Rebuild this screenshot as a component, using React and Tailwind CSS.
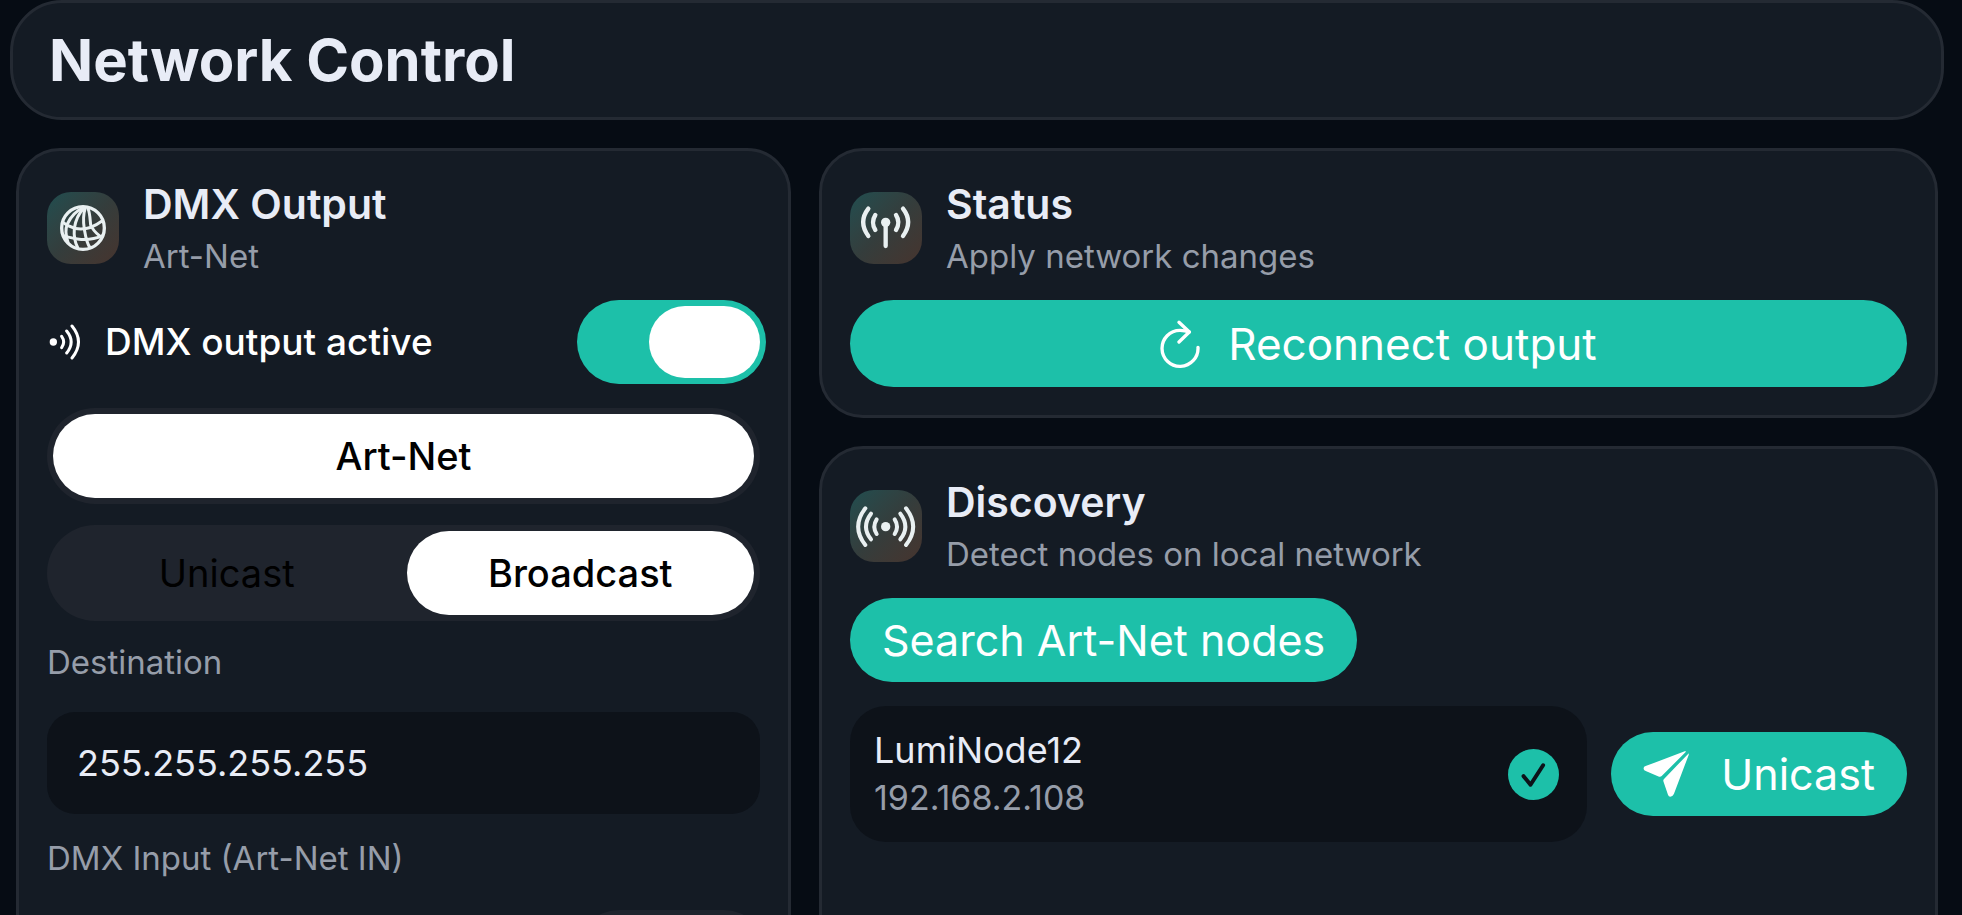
function GlobeIcon() {
  return (
    <svg viewBox="0 0 138 138" className="size-[46px]" fill="none" stroke="currentColor" strokeWidth="9" strokeLinecap="round" aria-hidden="true">
      <circle cx="69" cy="69" r="64" strokeWidth="10" />
      <path d="M70 8C48 18 31 38 22 57C15 74 17 92 24 112" />
      <path d="M73 8C57 24 47 44 43 70C41 94 43 110 54 130" />
      <path d="M76 8C70 26 69 48 73 72C77 96 79 112 90 128" />
      <path d="M84 10C90 26 90 42 92 60C98 74 108 84 118 92" />
      <path d="M8 52L24 62C54 78 88 76 126 48" />
      <path d="M10 92C42 102 82 112 128 92" />
    </svg>
  );
}

function AntennaIcon() {
  return (
    <svg viewBox="0 0 216 216" className="size-18" fill="none" stroke="currentColor" strokeWidth="13" strokeLinecap="round" aria-hidden="true">
      <circle cx="107" cy="91" r="14" fill="currentColor" stroke="none" />
      <path d="M107 94V162" />
      <path d="M76 69Q62 91 76 114M138 69Q152 91 138 114" />
      <path d="M55 50Q24 90 55 132M159 50Q190 90 159 132" />
    </svg>
  );
}

function RadioWavesIcon() {
  return (
    <svg viewBox="0 0 216 216" className="size-18" fill="none" stroke="currentColor" strokeWidth="12" strokeLinecap="round" aria-hidden="true">
      <circle cx="107" cy="110" r="14" fill="currentColor" stroke="none" />
      <path d="M80 88Q66 110 80 132M134 88Q148 110 134 132" />
      <path d="M63 71Q33 110 63 148M151 71Q181 110 151 148" />
      <path d="M46 55Q3 110 46 165M168 55Q211 110 168 165" />
    </svg>
  );
}

function WaveIcon() {
  return (
    <svg viewBox="0 0 102 114" className="w-[34px] h-[38px]" fill="none" stroke="currentColor" strokeWidth="9" strokeLinecap="round" aria-hidden="true">
      <circle cx="19" cy="57" r="11" fill="currentColor" stroke="none" />
      <path d="M44 40Q56 57 44 74M59 24Q86 57 59 90M75 9Q114 57 75 105" />
    </svg>
  );
}

function ReloadIcon() {
  return (
    <svg viewBox="0 0 120 144" className="w-10 h-12" fill="none" stroke="currentColor" strokeWidth="10" strokeLinecap="round" strokeLinejoin="round" aria-hidden="true">
      <path d="M114 82A54 54 0 1 1 60 31Q74 31 88 36" />
      <path d="M57 7L88 36L57 66" />
    </svg>
  );
}

function PlaneIcon() {
  return (
    <svg viewBox="0 0 140 140" className="size-[46px]" fill="currentColor" aria-hidden="true">
      <path d="M2 52Q2 48 8 46L127 1Q132 0 130 3L57 76Q54 79 49 78L10 62Q2 59 2 55Z" />
      <path d="M138 8Q140 5 139 12L94 131Q90 139 83 139Q78 139 76 133L62 92Q61 88 64 85Z" />
    </svg>
  );
}

function CheckBadge() {
  return (
    <svg viewBox="0 0 154 154" className="size-[51px]" fill="none" role="img" aria-label="Selected">
      <circle cx="77" cy="77" r="77" fill="#1dc0a9" />
      <path d="M47 82L68 108L106 49" stroke="#0d1219" strokeWidth="12" strokeLinecap="round" strokeLinejoin="round" />
    </svg>
  );
}

function Card({ icon, title, subtitle, children }) {
  return (
    <section className="rounded-[44px] border-3 border-[#242a33] bg-[#141b24] p-7">
      <div className="mb-[23px] flex h-[98px] items-center gap-6">
        <div className="flex size-18 shrink-0 items-center justify-center rounded-3xl bg-linear-to-br from-[#1f4e50] via-[#343d3c] to-[#46342e] text-[#e9f0f1]">
          {icon}
        </div>
        <div>
          <h2 className="text-[41px] leading-14 font-semibold text-[#e8ecf6]">{title}</h2>
          <p className="text-[33px] leading-12 text-[#969da9]">{subtitle}</p>
        </div>
      </div>
      {children}
    </section>
  );
}

function Switch({ id, defaultChecked }) {
  return (
    <input
      id={id}
      type="checkbox"
      role="switch"
      defaultChecked={defaultChecked}
      className="-mr-1.5 h-[84px] w-[189px] shrink-0 appearance-none rounded-full bg-[#1f242d] p-1.5 before:block before:h-full before:w-[111px] before:rounded-full before:bg-white checked:bg-[#1dc0a9] checked:before:ml-auto"
    />
  );
}

function Segmented({ name, options, selected }) {
  return (
    <div role="radiogroup" aria-label={name} className="flex h-24 gap-1.5 rounded-full bg-[#1f242d] p-1.5">
      {options.map((option) => (
        <label
          key={option}
          className="flex flex-1 items-center justify-center rounded-full text-[38px] text-black has-checked:bg-white has-checked:font-medium"
        >
          <input type="radio" name={name} defaultChecked={option === selected} className="sr-only" />
          {option}
        </label>
      ))}
    </div>
  );
}

export default function App() {
  return (
    <div className="h-screen overflow-hidden bg-[#060c14] pr-[18px] pl-2.5 font-['Inter',sans-serif]">
      <header className="flex h-[120px] items-center rounded-[52px] border-3 border-[#242a33] bg-[#141b24] px-9">
        <h1 className="text-[58px] font-bold text-[#e8ecf6]">Network Control</h1>
      </header>

      <main className="mt-7 grid grid-cols-[775fr_1119fr] gap-7 px-1.5">
        <Card icon={<GlobeIcon />} title="DMX Output" subtitle="Art-Net">
          <div className="flex items-center justify-between">
            <label htmlFor="dmx-output" className="flex items-center gap-6 text-[37px] font-medium text-white">
              <WaveIcon />
              DMX output active
            </label>
            <Switch id="dmx-output" defaultChecked />
          </div>

          <div className="mt-6 flex flex-col gap-[21px]">
            <Segmented name="Protocol" options={['Art-Net']} selected="Art-Net" />
            <Segmented name="Mode" options={['Unicast', 'Broadcast']} selected="Broadcast" />
          </div>

          <label htmlFor="destination" className="mt-[21px] block text-[33px] leading-10 text-[#969da9]">
            Destination
          </label>
          <input
            id="destination"
            type="text"
            defaultValue="255.255.255.255"
            className="mt-[30px] block h-[102px] w-full rounded-[28px] bg-[#0d1219] px-[30px] text-[36px] text-[#e8ecf6]"
          />

          <div className="mt-6">
            <label htmlFor="dmx-input" className="mb-8 block text-[33px] leading-10 text-[#969da9]">
              DMX Input (Art-Net IN)
            </label>
            <div className="flex justify-end">
              <Switch id="dmx-input" />
            </div>
          </div>
        </Card>

        <div className="flex flex-col gap-7">
          <Card icon={<AntennaIcon />} title="Status" subtitle="Apply network changes">
            <button type="button" className="flex h-[87px] w-full items-center justify-center gap-7 rounded-full bg-[#1dc0a9] text-[44px] text-white">
              <ReloadIcon />
              Reconnect output
            </button>
          </Card>

          <div className="flex flex-1 flex-col *:flex-1">
            <Card icon={<RadioWavesIcon />} title="Discovery" subtitle="Detect nodes on local network">
              <button type="button" className="h-[84px] rounded-full bg-[#1dc0a9] px-8 text-[43px] text-white">
                Search Art-Net nodes
              </button>
              <div className="mt-6 flex items-center gap-6">
                <div className="flex h-[136px] flex-1 items-center justify-between rounded-[36px] bg-[#0d1219] pr-7 pl-6">
                  <div>
                    <p className="text-[36px] leading-12 text-[#e8ecf6]">LumiNode12</p>
                    <p className="text-[34px] leading-12 text-[#969da9]">192.168.2.108</p>
                  </div>
                  <CheckBadge />
                </div>
                <button type="button" className="flex h-[84px] items-center gap-8 rounded-full bg-[#1dc0a9] px-8 text-[43px] text-white">
                  <PlaneIcon />
                  Unicast
                </button>
              </div>
            </Card>
          </div>
        </div>
      </main>
    </div>
  );
}
